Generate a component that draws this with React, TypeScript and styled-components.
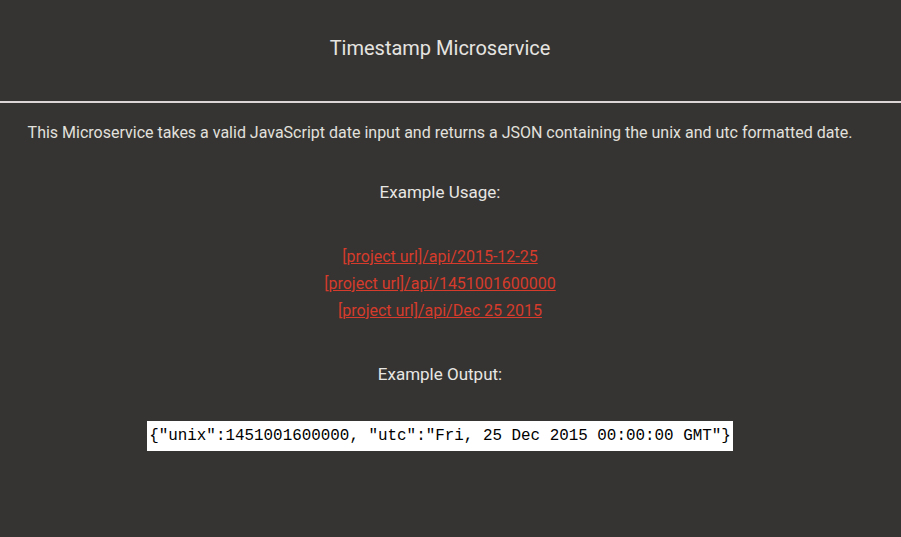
import React from "react";
import styled, { createGlobalStyle } from "styled-components";

const Global = createGlobalStyle`
  html, body { margin: 0; padding: 0; background: #353432; }
  body {
    font-family: Roboto, "Liberation Sans", sans-serif;
    font-size: 16px;
    color: #e2e0dd;
    text-align: center;
  }
`;

const Page = styled.div`
  min-height: 537px;
  background: #353432;
  display: flex;
  flex-direction: column;
`;

const Header = styled.header`
  height: 103px;
  box-sizing: border-box;
  border-bottom: 2px solid #dcd7d6;
  display: flex;
  align-items: center;
  justify-content: center;
  padding-right: 21px;
  padding-bottom: 5px;
`;

const Title = styled.h1`
  margin: 0;
  font-size: 20px;
  font-weight: 400;
  color: #e6e4e1;
`;

const Main = styled.main`
  display: flex;
  flex-direction: column;
  align-items: center;
  padding-right: 21px;
`;

const Intro = styled.p`
  margin: 19px 0 0;
  line-height: 22px;
`;

const Heading = styled.h3<{ $top: number }>`
  margin: ${(p) => p.$top}px 0 0;
  font-size: 17px;
  font-weight: 400;
  line-height: 22px;
  color: #e8e6e3;
`;

const LinkList = styled.ul`
  list-style: none;
  margin: 40px 0 0;
  padding: 0;
  display: flex;
  flex-direction: column;
  align-items: center;
`;

const Item = styled.li`
  line-height: 27px;
`;

const Link = styled.a`
  color: #d63b2b;
  text-decoration: underline;
`;

const CodeBox = styled.code`
  margin-top: 36px;
  display: inline-block;
  font-family: "Liberation Mono", monospace;
  font-size: 15.9px;
  line-height: 26px;
  padding: 2px;
  color: #000;
  background: #fff;
  white-space: pre;
`;

const links = [
  "[project url]/api/2015-12-25",
  "[project url]/api/1451001600000",
  "[project url]/api/Dec 25 2015",
];

export default function App() {
  return (
    <>
      <Global />
      <Page>
        <Header>
          <Title>Timestamp Microservice</Title>
        </Header>
        <Main>
          <Intro>
            This Microservice takes a valid JavaScript date input and returns a JSON containing the unix and utc formatted date.
          </Intro>
          <Heading $top={37}>Example Usage:</Heading>
          <LinkList>
            {links.map((l) => (
              <Item key={l}>
                <Link href="#">{l}</Link>
              </Item>
            ))}
          </LinkList>
          <Heading $top={39}>Example Output:</Heading>
          <CodeBox>{'{"unix":1451001600000, "utc":"Fri, 25 Dec 2015 00:00:00 GMT"}'}</CodeBox>
        </Main>
      </Page>
    </>
  );
}
